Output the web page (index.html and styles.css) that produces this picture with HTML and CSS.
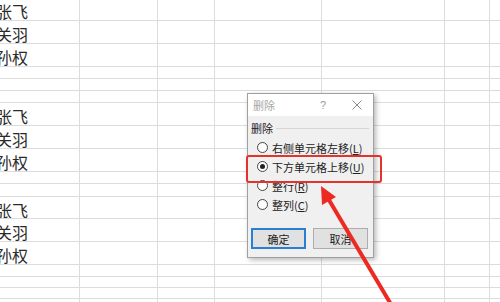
FILE: index.html
```html
<!DOCTYPE html>
<html lang="zh">
<head>
<meta charset="utf-8">
<link rel="stylesheet" href="styles.css">
</head>
<body>
<div class="page">
  <div class="sheet">
    <div class="row r23 first"><div class="c c1">张飞</div><div class="c c2"></div><div class="c c3"></div><div class="c c4"></div><div class="c c5"></div><div class="c c6"></div><div class="c c7"></div></div>
    <div class="row r23"><div class="c c1">关羽</div><div class="c c2"></div><div class="c c3"></div><div class="c c4"></div><div class="c c5"></div><div class="c c6"></div><div class="c c7"></div></div>
    <div class="row r23"><div class="c c1">孙权</div><div class="c c2"></div><div class="c c3"></div><div class="c c4"></div><div class="c c5"></div><div class="c c6"></div><div class="c c7"></div></div>
    <div class="row r12"><div class="c c1"></div><div class="c c2"></div><div class="c c3"></div><div class="c c4"></div><div class="c c5"></div><div class="c c6"></div><div class="c c7"></div></div>
    <div class="row r12"><div class="c c1"></div><div class="c c2"></div><div class="c c3"></div><div class="c c4"></div><div class="c c5"></div><div class="c c6"></div><div class="c c7"></div></div>
    <div class="row r12"><div class="c c1"></div><div class="c c2"></div><div class="c c3"></div><div class="c c4"></div><div class="c c5"></div><div class="c c6"></div><div class="c c7"></div></div>
    <div class="row r23"><div class="c c1">张飞</div><div class="c c2"></div><div class="c c3"></div><div class="c c4"></div><div class="c c5"></div><div class="c c6"></div><div class="c c7"></div></div>
    <div class="row r23"><div class="c c1">关羽</div><div class="c c2"></div><div class="c c3"></div><div class="c c4"></div><div class="c c5"></div><div class="c c6"></div><div class="c c7"></div></div>
    <div class="row r23"><div class="c c1">孙权</div><div class="c c2"></div><div class="c c3"></div><div class="c c4"></div><div class="c c5"></div><div class="c c6"></div><div class="c c7"></div></div>
    <div class="row r12"><div class="c c1"></div><div class="c c2"></div><div class="c c3"></div><div class="c c4"></div><div class="c c5"></div><div class="c c6"></div><div class="c c7"></div></div>
    <div class="row r13"><div class="c c1"></div><div class="c c2"></div><div class="c c3"></div><div class="c c4"></div><div class="c c5"></div><div class="c c6"></div><div class="c c7"></div></div>
    <div class="row r22"><div class="c c1">张飞</div><div class="c c2"></div><div class="c c3"></div><div class="c c4"></div><div class="c c5"></div><div class="c c6"></div><div class="c c7"></div></div>
    <div class="row r23"><div class="c c1">关羽</div><div class="c c2"></div><div class="c c3"></div><div class="c c4"></div><div class="c c5"></div><div class="c c6"></div><div class="c c7"></div></div>
    <div class="row r23"><div class="c c1">孙权</div><div class="c c2"></div><div class="c c3"></div><div class="c c4"></div><div class="c c5"></div><div class="c c6"></div><div class="c c7"></div></div>
    <div class="row r12"><div class="c c1"></div><div class="c c2"></div><div class="c c3"></div><div class="c c4"></div><div class="c c5"></div><div class="c c6"></div><div class="c c7"></div></div>
    <div class="row r11"><div class="c c1"></div><div class="c c2"></div><div class="c c3"></div><div class="c c4"></div><div class="c c5"></div><div class="c c6"></div><div class="c c7"></div></div>
    <div class="row r11"><div class="c c1"></div><div class="c c2"></div><div class="c c3"></div><div class="c c4"></div><div class="c c5"></div><div class="c c6"></div><div class="c c7"></div></div>
    <div class="row r11"><div class="c c1"></div><div class="c c2"></div><div class="c c3"></div><div class="c c4"></div><div class="c c5"></div><div class="c c6"></div><div class="c c7"></div></div>
  </div>

  <div class="dlg">
    <div class="dlg-title">
      <span class="dlg-name">删除</span>
      <span class="dlg-help">?</span>
      <span class="dlg-close">
        <svg width="10" height="10" viewBox="0 0 10 10"><path d="M0.5 0.5L9.5 9.5M9.5 0.5L0.5 9.5" stroke="#8a8a8a" stroke-width="1" fill="none"/></svg>
      </span>
    </div>
    <div class="dlg-body">
      <div class="grp"><span class="grp-label">删除</span><span class="grp-line"></span></div>
      <div class="opts">
        <div class="opt"><span class="radio"></span><span>右侧单元格左移(<u>L</u>)</span></div>
        <div class="opt"><span class="radio on"></span><span>下方单元格上移(<u>U</u>)</span></div>
        <div class="opt"><span class="radio"></span><span>整行(<u>R</u>)</span></div>
        <div class="opt"><span class="radio"></span><span>整列(<u>C</u>)</span></div>
      </div>
      <div class="btns">
        <div class="btn primary">确定</div>
        <div class="btn">取消</div>
      </div>
    </div>
  </div>

  <div class="mark"></div>
  <svg class="arrow" width="500" height="302" viewBox="0 0 500 302">
    <line x1="329" y1="200" x2="392" y2="306" stroke="#ec2a22" stroke-width="4"/>
    <polygon points="321,186 336,197 322,205" fill="#ec2a22"/>
  </svg>
</div>
</body>
</html>
```

FILE: styles.css
```css
* { box-sizing: border-box; }
html, body { margin: 0; padding: 0; background: #fff; }
body {
  width: 500px;
  height: 302px;
  overflow: hidden;
  font-family: "Noto Sans CJK SC", "Noto Sans", sans-serif;
}
.page {
  position: relative;
  width: 500px;
  height: 302px;
  overflow: hidden;
}
.sheet {
  margin-top: -2px;
  display: flex;
  flex-direction: column;
}
.row {
  display: flex;
  border-bottom: 1px solid #dcdcdc;
}
.r23 { height: 23px; }
.r22 { height: 22px; }
.r13 { height: 13px; }
.r12 { height: 12px; }
.r11 { height: 11px; }
.c {
  border-right: 1px solid #dcdcdc;
  flex: none;
  font-size: 16px;
  line-height: 22px;
  padding-top: 2px;
  color: #2a2a2a;
  white-space: nowrap;
  overflow: hidden;
}
.c1 { width: 80px; text-indent: -4px; }
.c2 { width: 78px; }
.c3 { width: 57px; }
.c4 { width: 107px; }
.c5 { width: 123px; }
.c6 { width: 45px; }
.c7 { width: 20px; border-right: none; }

.dlg {
  position: absolute;
  left: 247px;
  top: 93px;
  width: 127px;
  height: 165px;
  border: 1px solid #a0a0a0;
  background: #f0f0f0;
  box-shadow: 2px 2px 5px rgba(0,0,0,0.28);
  font-size: 11px;
  color: #222;
  display: flex;
  flex-direction: column;
}
.dlg-title {
  height: 22px;
  background: #fff;
  display: flex;
  align-items: center;
  padding-left: 5px;
  color: #a8a8a8;
  flex: none;
  white-space: nowrap;
}
.dlg-name { flex: none; }
.dlg-help {
  flex: none;
  margin-left: 45px;
  color: #9a9a9a;
  font-family: "Liberation Sans", sans-serif;
  font-size: 11px;
}
.dlg-close {
  flex: none;
  margin-left: 26px;
  display: flex;
}
.dlg-body {
  padding: 5px 4px 0 3px;
  display: flex;
  flex-direction: column;
}
.grp {
  display: flex;
  align-items: center;
  height: 14px;
  line-height: 14px;
  gap: 3px;
  white-space: nowrap;
}
.grp-label { flex: none; }
.grp-line {
  flex: 1;
  height: 1px;
  background: #d6d6d6;
  margin-top: 1px;
}
.opts {
  margin-top: 3px;
  padding-left: 6px;
  display: flex;
  flex-direction: column;
}
.opt {
  height: 19px;
  display: flex;
  align-items: center;
  gap: 4px;
  white-space: nowrap;
}
.radio {
  width: 11px;
  height: 11px;
  border: 1px solid #444;
  border-radius: 50%;
  background: #fff;
  flex: none;
  display: flex;
  align-items: center;
  justify-content: center;
}
.radio.on::after {
  content: "";
  width: 5px;
  height: 5px;
  border-radius: 50%;
  background: #222;
}
.btns {
  margin-top: 14px;
  display: flex;
  gap: 7px;
}
.btn {
  width: 55px;
  height: 21px;
  background: #e1e1e1;
  border: 1px solid #adadad;
  display: flex;
  align-items: center;
  justify-content: center;
  font-size: 11px;
}
.btn.primary {
  border: 2px solid #2a7fd4;
}

.mark {
  position: absolute;
  left: 246px;
  top: 155px;
  width: 136px;
  height: 28px;
  border: 2.5px solid #e6322c;
  border-radius: 3px;
}
.arrow {
  position: absolute;
  left: 0;
  top: 0;
}
```
